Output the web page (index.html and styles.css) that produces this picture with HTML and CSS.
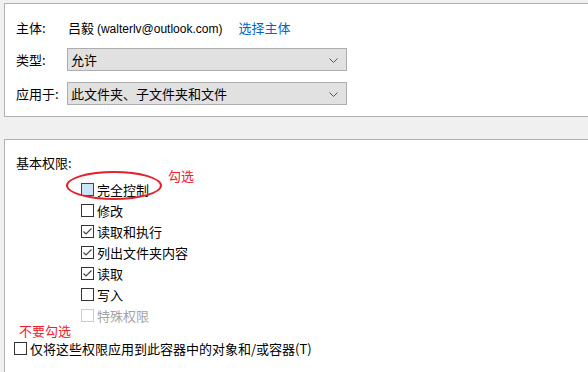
FILE: index.html
```html
<!DOCTYPE html>
<html lang="zh-CN">
<head>
<meta charset="utf-8">
<link rel="stylesheet" href="styles.css">
</head>
<body>
<div class="panel panel-top">
  <div class="row row-owner">
    <span class="label">主体:</span>
    <span class="value">吕毅 <span class="latin">(walterlv@outlook.com)</span></span>
    <span class="link">选择主体</span>
  </div>
  <div class="row row-type">
    <span class="label">类型:</span>
    <div class="select"><span>允许</span><svg class="chev" width="9" height="5" viewBox="0 0 9 5"><path d="M0.5 0.5 L4.5 4.5 L8.5 0.5" fill="none" stroke="#555" stroke-width="1"/></svg></div>
  </div>
  <div class="row row-apply">
    <span class="label">应用于:</span>
    <div class="select"><span>此文件夹、子文件夹和文件</span><svg class="chev" width="9" height="5" viewBox="0 0 9 5"><path d="M0.5 0.5 L4.5 4.5 L8.5 0.5" fill="none" stroke="#555" stroke-width="1"/></svg></div>
  </div>
</div>

<div class="panel panel-bottom">
  <div class="title">基本权限:</div>
  <ul class="perms">
    <li><span class="cb cb-focus"></span>完全控制</li>
    <li><span class="cb"></span>修改</li>
    <li><span class="cb cb-checked"><svg width="11" height="11" viewBox="0 0 11 11"><path d="M1.5 5.5 L4 8 L9.5 2.5" fill="none" stroke="#444" stroke-width="1.2"/></svg></span>读取和执行</li>
    <li><span class="cb cb-checked"><svg width="11" height="11" viewBox="0 0 11 11"><path d="M1.5 5.5 L4 8 L9.5 2.5" fill="none" stroke="#444" stroke-width="1.2"/></svg></span>列出文件夹内容</li>
    <li><span class="cb cb-checked"><svg width="11" height="11" viewBox="0 0 11 11"><path d="M1.5 5.5 L4 8 L9.5 2.5" fill="none" stroke="#444" stroke-width="1.2"/></svg></span>读取</li>
    <li><span class="cb"></span>写入</li>
    <li class="disabled"><span class="cb"></span>特殊权限</li>
  </ul>
  <div class="only-row"><span class="cb"></span>仅将这些权限应用到此容器中的对象和/或容器(T)</div>

  <div class="ellipse"></div>
  <span class="note note-check">勾选</span>
  <span class="note note-nocheck">不要勾选</span>
</div>
</body>
</html>
```

FILE: styles.css
```css
html, body {
  margin: 0;
  padding: 0;
}
body {
  width: 588px;
  height: 372px;
  overflow: hidden;
  background: #f0f0f0;
  font-family: "Noto Sans CJK SC", "Noto Sans", sans-serif;
  font-size: 13px;
  color: #000;
}
.panel {
  background: #fff;
  border: 1px solid #b1b1b1;
  border-right: none;
  margin-left: 4px;
  box-sizing: border-box;
}
.panel-top {
  margin-top: 3px;
  height: 114px;
  padding: 12px 0 0 11px;
}
.row {
  display: flex;
  align-items: center;
  height: 23px;
}
.row-type { margin-top: 9px; }
.row-apply { margin-top: 11px; }
.label {
  width: 51px;
  flex: none;
}
.value {
  margin-left: 1px;
}
.latin {
  font-family: "Liberation Sans", Arial, sans-serif;
  font-size: 12px;
}
.link {
  color: #0066cc;
  margin-left: 16px;
}
.select {
  width: 280px;
  height: 23px;
  box-sizing: border-box;
  background: #e1e1e1;
  border: 1px solid #adadad;
  display: flex;
  align-items: center;
  justify-content: space-between;
  padding: 0 8px 0 3px;
}
.chev { display: block; margin-top: 1px; }

.panel-bottom {
  margin-top: 22px;
  height: 240px;
  border-bottom: none;
  position: relative;
  padding-top: 13px;
}
.title {
  line-height: 20px;
  height: 20px;
  padding-left: 11px;
}
.perms {
  list-style: none;
  margin: 6px 0 0 0;
  padding: 0 0 0 76px;
}
.perms li {
  height: 21px;
  display: flex;
  align-items: center;
}
.cb {
  width: 13px;
  height: 13px;
  box-sizing: border-box;
  border: 1px solid #333;
  background: #fff;
  margin-right: 3px;
  flex: none;
  display: flex;
  align-items: center;
  justify-content: center;
}
.cb svg { display: block; }
.cb-focus {
  background: #cce4f7;
  border-color: #005499;
}
.disabled { color: #a3a3a3; }
.disabled .cb { border-color: #cccccc; }
.only-row {
  margin-top: 12px;
  padding-left: 9px;
  height: 21px;
  display: flex;
  align-items: center;
}
.ellipse {
  position: absolute;
  left: 61px;
  top: 31px;
  width: 96px;
  height: 29px;
  box-sizing: border-box;
  border: 2px solid #e0232e;
  border-radius: 50%;
}
.note {
  position: absolute;
  color: #f0202d;
  font-size: 13px;
  line-height: 16px;
}
.note-check {
  left: 163px;
  top: 28px;
}
.note-nocheck {
  left: 14px;
  top: 183px;
}
```
